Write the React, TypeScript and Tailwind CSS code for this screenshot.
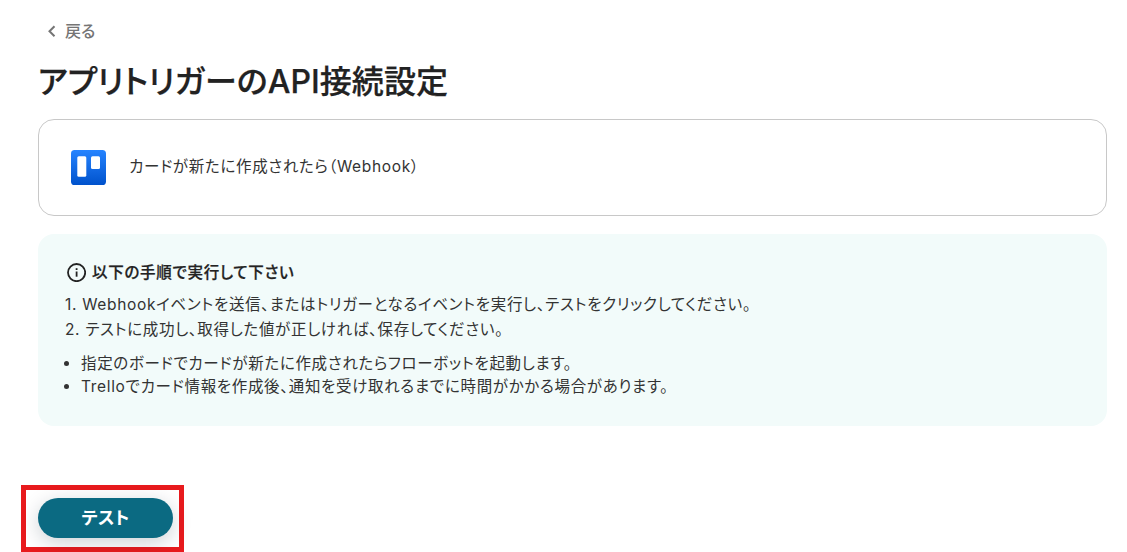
import type { ReactNode } from "react";

function InfoIcon() {
  return (
    <svg className="h-5 w-5" viewBox="0 0 20 20" fill="none" stroke="#222222" strokeWidth="1.8">
      <circle cx="10.6" cy="10.6" r="8.6" />
      <path d="M10.6 9.5v5.2" />
      <path d="M10.6 6.2V8" />
    </svg>
  );
}

function TrelloLogo() {
  return (
    <svg className="h-[35px] w-[35px]" viewBox="0 0 35 35">
      <defs>
        <linearGradient id="trello" x1="0" y1="0" x2="0" y2="1">
          <stop offset="0" stopColor="#2684ff" />
          <stop offset="1" stopColor="#0052cc" />
        </linearGradient>
      </defs>
      <rect width="35" height="35" rx="3.6" fill="url(#trello)" />
      <rect x="6.3" y="6.3" width="9" height="20.5" rx="1.5" fill="#fff" />
      <rect x="20" y="6.3" width="9" height="12.7" rx="1.5" fill="#fff" />
    </svg>
  );
}

function Line({ children, className }: { children: ReactNode; className: string }) {
  return <li className={`whitespace-nowrap ${className}`}>{children}</li>;
}

export default function App() {
  return (
    <div className="h-[552px] overflow-hidden bg-white pr-5 pl-[38px] font-['Inter','Noto_Sans_CJK_JP',sans-serif] text-[15.5px] tracking-[0.67px] text-[#333333] [font-feature-settings:'palt']">
      <button className="mt-[19px] ml-[9px] flex h-6 items-center gap-2 text-base font-medium tracking-normal text-[#757575]">
        <svg className="h-3 w-2.5" viewBox="0 0 10 12" fill="none" stroke="currentColor" strokeWidth="2">
          <path d="M7.5 1.2 2.5 6.2l5 5" />
        </svg>
        戻る
      </button>

      <h1 className="mt-[18px] h-[58px] text-[32px] leading-[42px] font-medium tracking-[0.06px] whitespace-nowrap text-[#222222] [-webkit-text-stroke:0.25px_#222222]">
        アプリトリガーのAPI接続設定
      </h1>

      <section className="flex h-[97px] items-center gap-[23px] rounded-2xl border border-[#c8c8c8] px-8">
        <TrelloLogo />
        <p className="pb-0.5 whitespace-nowrap">カードが新たに作成されたら（Webhook）</p>
      </section>

      <section className="mt-[18px] h-[192px] rounded-2xl bg-[#f2fbfa] px-[28px] pt-[26px]">
        <div className="flex h-6 items-center gap-[6px] font-medium tracking-[0.72px] text-[#222222] [-webkit-text-stroke:0.25px_#222222]">
          <InfoIcon />
          <span className="pt-0.5">以下の手順で実行して下さい</span>
        </div>
        <ol className="mt-[8px] -ml-px">
          <Line className="h-[25px] leading-[25px]">
            1. Webhookイベントを送信、またはトリガーとなるイベントを実行し、テストをクリックしてください。
          </Line>
          <Line className="h-[25px] leading-[25px]">2. テストに成功し、取得した値が正しければ、保存してください。</Line>
        </ol>
        <ul className="mt-[10px] list-disc pl-[15px]">
          <Line className="h-[23px] leading-[23px]">指定のボードでカードが新たに作成されたらフローボットを起動します。</Line>
          <Line className="h-[23px] leading-[23px]">
            Trelloでカード情報を作成後、通知を受け取れるまでに時間がかかる場合があります。
          </Line>
        </ul>
      </section>

      <div className="mt-[59px] -ml-[17px] flex h-[67px] w-[163px] items-center border-[5px] border-[#e81a1d] pb-px pl-3">
        <button className="h-10 w-[135px] rounded-full bg-[#0b6a82] text-[17.5px] font-bold tracking-[0.25px] text-white shadow-[0_5px_20px_rgba(0,30,50,0.2)]">
          テスト
        </button>
      </div>
    </div>
  );
}
